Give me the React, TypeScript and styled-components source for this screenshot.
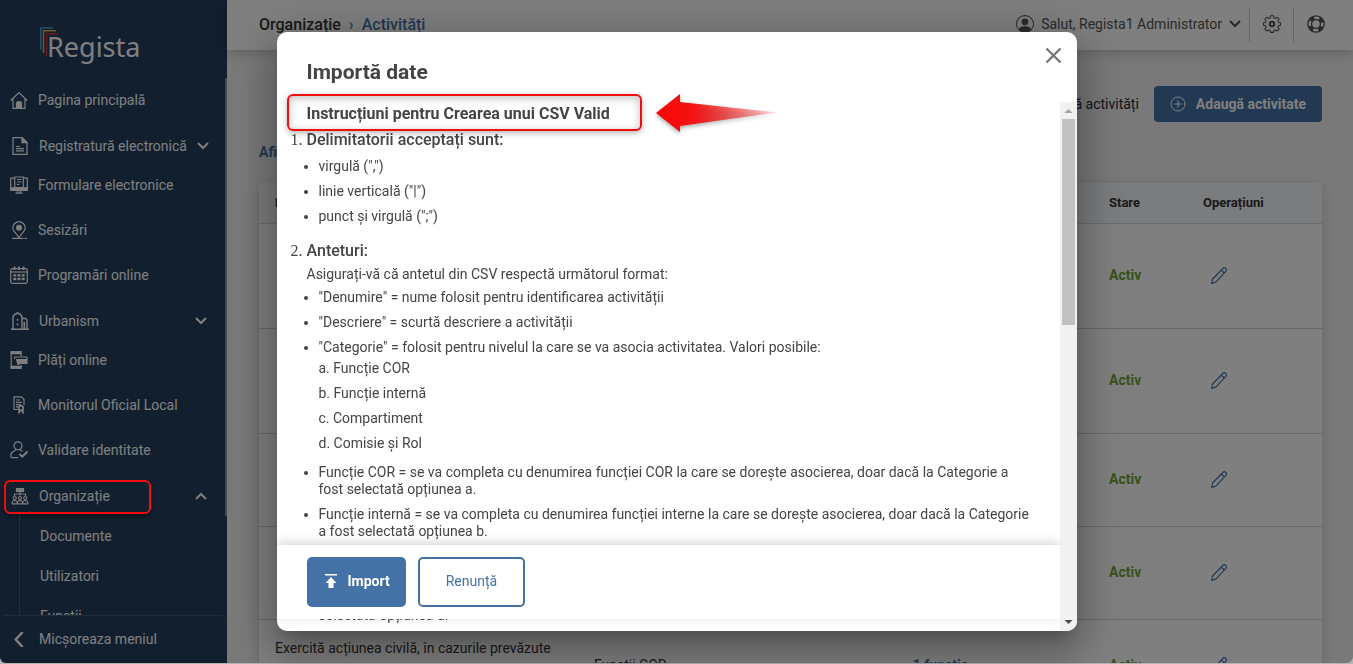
import React from 'react';
import styled, { createGlobalStyle, css } from 'styled-components';
import { BsPersonCircle } from 'react-icons/bs';

const GlobalStyle = createGlobalStyle`
  *, *::before, *::after { box-sizing: border-box; }
  body {
    margin: 0;
    background: #b4b4b4;
    font-family: Roboto, "Liberation Sans", sans-serif;
    font-size: 14px;
    color: #333;
  }
  h1, h2, h3, p, ul, ol { margin: 0; padding: 0; }
  button { font-family: inherit; cursor: pointer; }
  a { color: inherit; text-decoration: none; }
`;

/* ---------- Shell ---------- */

const Shell = styled.div`
  display: flex;
  height: calc(100vh - 1px);
  overflow: hidden;
  border-radius: 0 0 6px 6px;
  background: #f2f2f2;
`;

/* ---------- Sidebar ---------- */

const Sidebar = styled.aside`
  flex: 0 0 227px;
  min-width: 0;
  display: flex;
  flex-direction: column;
  background: #223e5e;
  color: #fff;
  font-size: 14px;
`;

const LogoLink = styled.a`
  flex: 0 0 78px;
  display: flex;
  align-items: flex-start;
  padding: 27px 0 0 40px;
`;

const LogoMark = styled.svg`
  flex: none;
  width: 19px;
  height: 30px;
  margin-right: -12px;
`;

const LogoName = styled.span`
  font-family: "Noto Sans", "Open Sans", sans-serif;
  font-size: 27px;
  line-height: 40px;
`;

const NavArea = styled.div`
  flex: 1;
  min-height: 0;
  display: flex;
  overflow: hidden;
`;

const Nav = styled.nav`
  flex: 1;
  min-width: 0;
  overflow: hidden;
`;

const NavThumb = styled.div`
  flex: none;
  width: 2px;
  height: 438px;
  background: #8d8f92;
`;

const NavItem = styled.a<{ $group?: boolean; $marked?: boolean }>`
  position: relative;
  display: flex;
  align-items: center;
  gap: 10px;
  height: ${p => (p.$group ? 40 : 45)}px;
  padding: ${p => (p.$group ? '5px 18px 0 11px' : '0 18px 1px 10px')};
  ${p => p.$marked && css`
    &::after {
      content: "";
      position: absolute;
      z-index: 20;
      left: 4px;
      top: 7px;
      width: 147px;
      height: 34px;
      border: 2px solid #f40d0d;
      border-radius: 6px;
      box-shadow: 0 2px 5px rgba(0, 0, 0, .4);
    }
  `}
`;

const NavLabel = styled.span`
  flex: 1;
  white-space: nowrap;
`;

const NavIcon = styled.svg`
  flex: none;
  width: 18px;
  height: 18px;
  fill: none;
  stroke: currentColor;
  stroke-width: 1.2;
`;

const Submenu = styled.div`
  margin-left: 19px;
  padding-top: 3px;
  border-left: 1px solid #4a6078;
`;

const SubItem = styled.a`
  display: flex;
  align-items: center;
  height: 40px;
  padding-left: 20px;
`;

const CollapseButton = styled.button`
  flex: 0 0 48px;
  display: flex;
  align-items: center;
  gap: 12px;
  padding: 0 12px 1px;
  border: 0;
  border-top: 1px solid #40586f;
  border-radius: 6px 6px 0 0;
  background: none;
  color: inherit;
  font-size: 14px;
`;

const ArrowIcon = styled.svg<{ $size: number }>`
  flex: none;
  width: ${p => p.$size}px;
  height: ${p => p.$size}px;
  fill: none;
  stroke: currentColor;
  stroke-width: 2;
`;

/* ---------- Main ---------- */

const Main = styled.div`
  flex: 1;
  min-width: 0;
  display: flex;
  flex-direction: column;
`;

const TopBar = styled.header`
  flex: 0 0 50px;
  display: flex;
  align-items: center;
  justify-content: space-between;
  padding: 0 16px 2px 32px;
  background: #fff;
  box-shadow: 0 3px 12px rgba(0, 0, 0, .2);
`;

const Breadcrumb = styled.nav`
  display: flex;
  gap: 8px;
  font-size: 16px;
  font-weight: 500;
`;

const CrumbLink = styled.a<{ $current?: boolean }>`
  color: ${p => (p.$current ? '#4472a6' : '#333')};
`;

const TopActions = styled.div`
  display: flex;
  align-items: center;
  height: 35px;
`;

const UserButton = styled.button`
  display: flex;
  align-items: center;
  gap: 7px;
  padding: 0 8px 0 0;
  border: 0;
  background: none;
  color: #555;
  font-size: 14px;
`;

const IconButton = styled.button`
  display: flex;
  align-items: center;
  justify-content: center;
  width: 44px;
  height: 35px;
  padding: 0;
  border: 0;
  border-left: 1px solid #ccc;
  background: none;
  color: #555;
`;

const Content = styled.main`
  flex: 1;
  min-height: 0;
  overflow: hidden;
  padding: 36px 31px 0 32px;
`;

const Toolbar = styled.div`
  display: flex;
  justify-content: flex-end;
  align-items: center;
  gap: 15px;
`;

const TextLink = styled.a`
  color: #1d2b3d;
`;

const AddButton = styled.button`
  display: flex;
  align-items: center;
  gap: 10px;
  height: 36px;
  padding: 0 16px;
  border: 0;
  border-radius: 4px;
  background: #4472a6;
  color: #fff;
  font-size: 14px;
  font-weight: 700;
`;

const FilterLink = styled.a`
  display: block;
  margin-top: 20px;
  line-height: 20px;
  color: #4472a6;
  font-weight: 700;
`;

const Table = styled.table`
  width: 100%;
  margin-top: 21px;
  table-layout: fixed;
  border-collapse: collapse;
  background: #fff;
  box-shadow: 0 4px 14px rgba(0, 0, 0, .14);
  border-radius: 4px;
`;

const HeadCell = styled.th<{ $width?: string }>`
  width: ${p => p.$width || 'auto'};
  height: 40px;
  padding: 0 16px;
  text-align: left;
  font-size: 13px;
  font-weight: 700;
  background: #f6f8fa;
  border-bottom: 1px solid #d5d9de;
`;

const Row = styled.tr<{ $tall?: boolean }>`
  height: ${p => (p.$tall ? 105 : 93)}px;
  border-bottom: 1px solid #d2d2d2;
`;

const Cell = styled.td<{ $top?: boolean }>`
  padding: ${p => (p.$top ? '20px 0 0 16px' : '0 16px 1px')};
  vertical-align: ${p => (p.$top ? 'top' : 'middle')};
  white-space: nowrap;
`;

const Status = styled.span`
  color: #6fa438;
  font-weight: 700;
`;

const CountLink = styled.a`
  color: #4472a6;
  font-weight: 700;
`;

const EditButton = styled.button`
  display: block;
  margin-left: 8px;
  padding: 3px 0 0;
  border: 0;
  background: none;
  color: #4472a6;
`;

/* ---------- Dialog ---------- */

const Backdrop = styled.div`
  position: fixed;
  inset: 0 0 1px;
  z-index: 10;
  display: flex;
  justify-content: center;
  padding: 32px 0;
  border-radius: 0 0 6px 6px;
  background: rgba(0, 0, 0, .5);
`;

const Dialog = styled.section`
  position: relative;
  display: flex;
  flex-direction: column;
  width: 800px;
  max-width: 100%;
  border-radius: 10px;
  background: #fff;
  color: #444;
  box-shadow: 0 11px 15px -7px rgba(0, 0, 0, .2), 0 24px 38px 3px rgba(0, 0, 0, .14),
    0 9px 46px 8px rgba(0, 0, 0, .22);
`;

const DialogHeader = styled.header`
  flex: 0 0 70px;
  display: flex;
  justify-content: space-between;
  align-items: flex-start;
  padding: 15px 15px 0 30px;
`;

const DialogTitle = styled.h1`
  margin-top: 12px;
  font-size: 21px;
  line-height: 26px;
  font-weight: 700;
`;

const CloseButton = styled.button`
  display: flex;
  padding: 0;
  border: 0;
  background: none;
  color: #777;
`;

const DialogBody = styled.div`
  flex: 1;
  min-height: 0;
  display: flex;
  overflow: hidden;
  border-radius: 0 0 10px 10px;
`;

const Scroller = styled.div`
  flex: 1;
  min-width: 0;
  overflow-y: auto;
  scrollbar-width: none;
`;

const Instructions = styled.div`
  padding: 1px 30px 20px;
  line-height: 17px;
`;

const SectionTitle = styled.h2`
  font-size: 16px;
  line-height: 22px;
  font-weight: 700;
`;

const Steps = styled.ol`
  margin-top: 5px;
`;

const Step = styled.li`
  margin-bottom: 16px;
  font-size: 16px;
  &::marker {
    font-family: "Liberation Serif", serif;
  }
`;

const StepTitle = styled.h3`
  font-size: 16px;
  line-height: 20px;
  font-weight: 500;
`;

const StepText = styled.p`
  margin-top: 5px;
  font-size: 14px;
`;

const Bullets = styled.ul<{ $close?: boolean }>`
  margin-top: ${p => (p.$close ? 6 : 8)}px;
  padding-left: 12px;
  font-size: 14px;
  list-style: disc;
`;

const Bullet = styled.li`
  margin-bottom: 8px;
`;

const Options = styled.ol`
  margin: 4px 0 12px;
  list-style: none;
`;

const DialogFooter = styled.footer`
  position: sticky;
  bottom: 12px;
  display: flex;
  gap: 12px;
  padding: 12px 30px;
  background: #fff;
  box-shadow: 0 -2px 10px rgba(0, 0, 0, .18);
`;

const ActionButton = styled.button<{ $primary?: boolean }>`
  display: flex;
  align-items: center;
  justify-content: center;
  gap: 9px;
  height: 50px;
  padding: ${p => (p.$primary ? '0 14px 2px' : '0 26px 2px')};
  border: 2px solid #4472a6;
  border-radius: 5px;
  background: ${p => (p.$primary ? '#4472a6' : '#fff')};
  color: ${p => (p.$primary ? '#fff' : '#4472a6')};
  font-size: 14px;
  font-weight: ${p => (p.$primary ? 700 : 400)};
`;

const ScrollTrack = styled.div`
  flex: 0 0 17px;
  display: flex;
  flex-direction: column;
  align-items: center;
  background: #f1f1f1;
`;

const ScrollArrow = styled.svg`
  flex: none;
  width: 17px;
  height: 17px;
`;

const ScrollThumb = styled.div`
  width: 13px;
  height: 39%;
  margin-bottom: auto;
  background: #c1c1c1;
`;

const Highlight = styled.div`
  position: absolute;
  left: 10px;
  top: 62px;
  width: 355px;
  height: 37px;
  border: 2px solid #f40d0d;
  border-radius: 6px;
  box-shadow: 0 2px 6px rgba(0, 0, 0, .3), inset 0 2px 8px rgba(0, 0, 0, .25);
  pointer-events: none;
`;

const Pointer = styled.svg`
  position: absolute;
  left: 378px;
  top: 60px;
  width: 124px;
  height: 46px;
  filter: drop-shadow(0 2px 2px rgba(0, 0, 0, .35));
  pointer-events: none;
`;

/* ---------- Drawings ---------- */

const Chevron = ({ dir, size = 12 }: { dir: 'up' | 'down' | 'left'; size?: number }) => {
  const d = { up: 'M1 9l5-5 5 5', down: 'M1 3l5 5 5-5', left: 'M8.500 0L3 6l5.500 6' }[dir];
  return <ArrowIcon $size={size} viewBox="0 0 12 12" aria-hidden="true"><path d={d} /></ArrowIcon>;
};

const icons: Record<string, React.ReactNode> = {
  home: (
    <>
      <path d="M.8 9.500L9 1.500l8.200 8M3 8v9.300h12V8" />
      <path d="M6.500 17v-5l1-1.200h3l1 1.200v5z" fill="currentColor" />
    </>
  ),
  file: (
    <>
      <path d="M2 .6h9l5 5v11.800H2z" />
      <path d="M11 .6v5h5z" fill="currentColor" />
      <path d="M5 9.500h4M5 11.700h8M5 13.900h8" />
    </>
  ),
  forms: (
    <>
      <path d="M4.500 2.200H.7v10.300h16.600V2.200h-3.800" />
      <path d="M.7 11.800h16.600v2.700H.7z" fill="currentColor" />
      <path d="M4.700 1h8.600v10.500H4.700zM7 3.500h4.500M7 6h4.500M7 8.500h2.500M7.500 15v2M10.500 15v2M5.500 17.200h7" />
    </>
  ),
  pin: (
    <>
      <path d="M9 16.500C6.500 12.500 2.800 10 2.800 6.900a6.200 6.200 0 0112.400 0c0 3.100-3.700 5.600-6.200 9.600zM2 17.300h11.500M14.500 17.300H17" />
      <circle cx="9" cy="6.700" r="2.400" fill="currentColor" />
    </>
  ),
  calendar: (
    <>
      <rect x=".7" y="2.700" width="16.600" height="14.600" rx="1.800" />
      <path d="M1 6h16" />
      <path d="M4.500 .5v3.500M9 .5v3.500M13.500 .5v3.500" strokeWidth="1.800" />
      <path d="M3.300 9.300h11.500M3.300 13h11.500" strokeWidth="2.300" strokeDasharray="3 1.200" />
    </>
  ),
  building: (
    <>
      <path d="M2 17V4.500L4 2h1l1.500-1.300L8 2h1l2 2.500V17M11.500 6.500h3l1.500 1.500v9M0 17.300h18" strokeWidth="1.400" />
      <path d="M6.500 7v1.800M6.500 11.500v1.800M13.300 10v7" strokeWidth="1.600" />
    </>
  ),
  pay: (
    <>
      <path d="M11 5V.9H1.200v16.200H11V14" />
      <path d="M1.200.9H11v1.800H1.200zM1.200 15.300H11v1.800H1.200z" fill="currentColor" />
      <path d="M4.500 8V6H17M17 6v2" />
      <path d="M6.500 8.600h10.500v3.900H9.500l-1.500 1z" fill="currentColor" />
    </>
  ),
  monitor: (
    <>
      <path d="M7.500 13.500H4V.8h7.500L14 3.500V9M6 4h4M6 6.300h6M6 8.600h5M6 10.900h2" />
      <circle cx="11" cy="12.200" r="2.300" strokeWidth="1.800" />
      <path d="M9.700 14.500l-1 3M12.300 14.500l1 3" strokeWidth="1.800" />
    </>
  ),
  validate: (
    <>
      <circle cx="8" cy="4.800" r="4" />
      <path d="M5.800 8.300c-.3 2-5.100 1.700-5.100 6.500 0 1.500.5 1.900 1.500 1.900h6M10.200 8.300c.2 1 1 1.500 2.300 1.900" />
      <path d="M9.500 13l2.700 2.700L17.500 10.500" strokeWidth="2" />
    </>
  ),
  org: (
    <>
      <path d="M5.500 1.500h7v3h-7z" fill="currentColor" />
      <path d="M9 5v3.500M3.500 9V7h11v2" />
      <circle cx="3.800" cy="11" r="1.500" /><circle cx="9" cy="11" r="1.500" /><circle cx="14.200" cy="11" r="1.500" />
      <path d="M1 16.500c0-4 5-4 5.500 0M6.300 16.500c0-4 5-4 5.500 0M11.600 16.500c0-4 5-4 5.500 0M1 16.800h16.200" />
    </>
  ),
};

const Pencil = () => (
  <svg width="16" height="17" viewBox="0 0 16 17" fill="none" stroke="currentColor" strokeWidth="1.200" strokeLinejoin="round" aria-hidden="true">
    <path d="M.7 16.300l.9-4.300L11.800 1.500a2 2 0 013 2.900L4.800 15.200zM10.300 3l3 3" />
  </svg>
);

const Gear = () => (
  <svg width="18" height="18" viewBox="0 0 18 18" fill="none" stroke="currentColor" strokeWidth="1.100" strokeLinejoin="round" aria-hidden="true">
    <path d="M7.600.7h2.800l.5 2.200 1.300.6 2-1.200 1.900 1.900-1.200 2 .6 1.300 2 .3v2.600l-2 .4-.6 1.300 1.200 2-1.900 1.900-2-1.200-1.300.6-.5 2H7.600l-.5-2-1.300-.6-2 1.200-1.900-1.900 1.200-2-.6-1.300-2-.4V7.800l2-.3.6-1.300-1.200-2 1.900-1.900 2 1.200 1.300-.6z" />
    <circle cx="9" cy="9" r="2.200" strokeWidth="2" />
  </svg>
);

const LifeRing = () => (
  <svg width="18" height="18" viewBox="0 0 18 18" fill="none" stroke="currentColor" aria-hidden="true">
    <circle cx="9" cy="9" r="8.200" strokeWidth="1.300" />
    <circle cx="9" cy="9" r="4.400" strokeWidth="1.300" />
    <circle cx="9" cy="9" r="6.400" strokeWidth="4" strokeDasharray="4.800 5.253" strokeDashoffset="-2.600" />
  </svg>
);

/* ---------- Data ---------- */

const menu = [
  { icon: 'home', label: 'Pagina principală' },
  { icon: 'file', label: 'Registratură electronică', group: true },
  { icon: 'forms', label: 'Formulare electronice' },
  { icon: 'pin', label: 'Sesizări' },
  { icon: 'calendar', label: 'Programări online' },
  { icon: 'building', label: 'Urbanism', group: true },
  { icon: 'pay', label: 'Plăți online' },
  { icon: 'monitor', label: 'Monitorul Oficial Local' },
  { icon: 'validate', label: 'Validare identitate' },
  { icon: 'org', label: 'Organizație', group: true, open: true },
];

const rows = [
  { tall: true },
  { tall: true },
  {},
  {},
  { name: 'Exercită acțiunea civilă, în cazurile prevăzute', category: 'Funcții COR', count: '1 funcție' },
] as { tall?: boolean; name?: string; category?: string; count?: string }[];

export default function App() {
  return (
    <>
      <GlobalStyle />
      <Shell>
        <Sidebar>
          <LogoLink href="#">
            <LogoMark viewBox="0 0 19 30" fill="none" strokeWidth="1.500" aria-hidden="true">
              <path d="M.8 23V1H13" stroke="#5c9bd1" />
              <path d="M3.500 26V3.800H16" stroke="#d8b84a" />
              <path d="M6.500 29V6.800H18.500" stroke="#d8323c" />
            </LogoMark>
            <LogoName>Regista</LogoName>
          </LogoLink>
          <NavArea>
            <Nav>
              {menu.map(m => (
                <NavItem key={m.label} href="#" $group={m.group} $marked={m.open}>
                  <NavIcon viewBox="0 0 18 18" aria-hidden="true">{icons[m.icon]}</NavIcon>
                  <NavLabel>{m.label}</NavLabel>
                  {m.group && <Chevron dir={m.open ? 'up' : 'down'} />}
                </NavItem>
              ))}
              <Submenu>
                <SubItem href="#">Documente</SubItem>
                <SubItem href="#">Utilizatori</SubItem>
                <SubItem href="#">Funcții</SubItem>
              </Submenu>
            </Nav>
            <NavThumb />
          </NavArea>
          <CollapseButton type="button">
            <Chevron dir="left" size={15} />
            Micșoreaza meniul
          </CollapseButton>
        </Sidebar>

        <Main>
          <TopBar>
            <Breadcrumb aria-label="Navigare">
              <CrumbLink href="#">Organizație</CrumbLink>
              <CrumbLink as="span" $current>›</CrumbLink>
              <CrumbLink href="#" $current>Activități</CrumbLink>
            </Breadcrumb>
            <TopActions>
              <UserButton type="button">
                <BsPersonCircle size={18} />
                <span>Salut, Regista1 Administrator</span>
                <Chevron dir="down" />
              </UserButton>
              <IconButton type="button" aria-label="Setări"><Gear /></IconButton>
              <IconButton type="button" aria-label="Ajutor"><LifeRing /></IconButton>
            </TopActions>
          </TopBar>
          <Content>
            <Toolbar>
              <TextLink href="#">Importă activități</TextLink>
              <AddButton type="button">
                <svg width="16" height="16" viewBox="0 0 16 16" fill="none" stroke="currentColor" aria-hidden="true">
                  <circle cx="8" cy="8" r="7" />
                  <path d="M8 4.500v7M4.500 8h7" />
                </svg>
                Adaugă activitate
              </AddButton>
            </Toolbar>
            <FilterLink href="#">Afișează</FilterLink>
            <Table>
              <thead>
                <tr>
                  <HeadCell $width="30%">Denumire</HeadCell>
                  <HeadCell $width="30%" />
                  <HeadCell />
                  <HeadCell $width="94px">Stare</HeadCell>
                  <HeadCell $width="135px">Operațiuni</HeadCell>
                </tr>
              </thead>
              <tbody>
                {rows.map((r, i) => (
                  <Row key={i} $tall={r.tall}>
                    <Cell $top>{r.name}</Cell>
                    <Cell>{r.category}</Cell>
                    <Cell><CountLink href="#">{r.count}</CountLink></Cell>
                    <Cell><Status>Activ</Status></Cell>
                    <Cell><EditButton type="button" aria-label="Editează"><Pencil /></EditButton></Cell>
                  </Row>
                ))}
              </tbody>
            </Table>
          </Content>
        </Main>
      </Shell>

      <Backdrop>
        <Dialog role="dialog" aria-modal="true" aria-labelledby="import-title">
          <DialogHeader>
            <DialogTitle id="import-title">Importă date</DialogTitle>
            <CloseButton type="button" aria-label="Închide">
              <svg width="17" height="17" viewBox="0 0 17 17" stroke="currentColor" strokeWidth="2.400" aria-hidden="true">
                <path d="M1.500 1.500l14 14M15.500 1.500l-14 14" />
              </svg>
            </CloseButton>
          </DialogHeader>
          <DialogBody>
            <Scroller>
              <Instructions>
                <SectionTitle>Instrucțiuni pentru Crearea unui CSV Valid</SectionTitle>
                <Steps>
                  <Step>
                    <StepTitle>Delimitatorii acceptați sunt:</StepTitle>
                    <Bullets>
                      <Bullet>virgulă (",")</Bullet>
                      <Bullet>linie verticală ("|")</Bullet>
                      <Bullet>punct și virgulă (";")</Bullet>
                    </Bullets>
                  </Step>
                  <Step>
                    <StepTitle>Anteturi:</StepTitle>
                    <StepText>Asigurați-vă că antetul din CSV respectă următorul format:</StepText>
                    <Bullets $close>
                      <Bullet>"Denumire" = nume folosit pentru identificarea activității</Bullet>
                      <Bullet>"Descriere" = scurtă descriere a activității</Bullet>
                      <Bullet>
                        "Categorie" = folosit pentru nivelul la care se va asocia activitatea. Valori posibile:
                        <Options>
                          <Bullet>a. Funcție COR</Bullet>
                          <Bullet>b. Funcție internă</Bullet>
                          <Bullet>c. Compartiment</Bullet>
                          <Bullet>d. Comisie și Rol</Bullet>
                        </Options>
                      </Bullet>
                      <Bullet>Funcție COR = se va completa cu denumirea funcției COR la care se dorește asocierea, doar dacă la Categorie a fost selectată opțiunea a.</Bullet>
                      <Bullet>Funcție internă = se va completa cu denumirea funcției interne la care se dorește asocierea, doar dacă la Categorie a fost selectată opțiunea b.</Bullet>
                      <Bullet>Compartiment = se va completa cu denumirea compartimentului la care se dorește asocierea, doar dacă la Categorie a fost selectată opțiunea c.</Bullet>
                      <Bullet>Comisie și Rol = se va completa cu denumirea comisiei la care se dorește asocierea, doar dacă a fost<br />selectată opțiunea d.</Bullet>
                    </Bullets>
                  </Step>
                </Steps>
              </Instructions>
              <DialogFooter>
                <ActionButton type="button" $primary>
                  <svg width="16" height="16" viewBox="0 0 16 16" fill="currentColor" aria-hidden="true">
                    <path d="M2 1h12v1.500H2zM8 4l5.500 6H10.500v5h-5v-5H2.500z" />
                  </svg>
                  Import
                </ActionButton>
                <ActionButton type="button">Renunță</ActionButton>
              </DialogFooter>
            </Scroller>
            <ScrollTrack aria-hidden="true">
              <ScrollArrow viewBox="0 0 17 17"><path d="M4.500 11l4-4 4 4z" fill="#a3a3a3" /></ScrollArrow>
              <ScrollThumb />
              <ScrollArrow viewBox="0 0 17 17"><path d="M4.500 6l4 4 4-4z" fill="#505050" /></ScrollArrow>
            </ScrollTrack>
          </DialogBody>
          <Highlight />
          <Pointer viewBox="0 0 124 46" aria-hidden="true">
            <defs>
              <linearGradient id="fade" x1="0" x2="1" y1="0" y2="0">
                <stop offset="0" stopColor="#f90606" />
                <stop offset=".3" stopColor="#f31212" />
                <stop offset="1" stopColor="#f31212" stopOpacity=".15" />
              </linearGradient>
            </defs>
            <path d="M1 21L25 2v8l97 10.500L25 34v6z" fill="url(#fade)" />
          </Pointer>
        </Dialog>
      </Backdrop>
    </>
  );
}
